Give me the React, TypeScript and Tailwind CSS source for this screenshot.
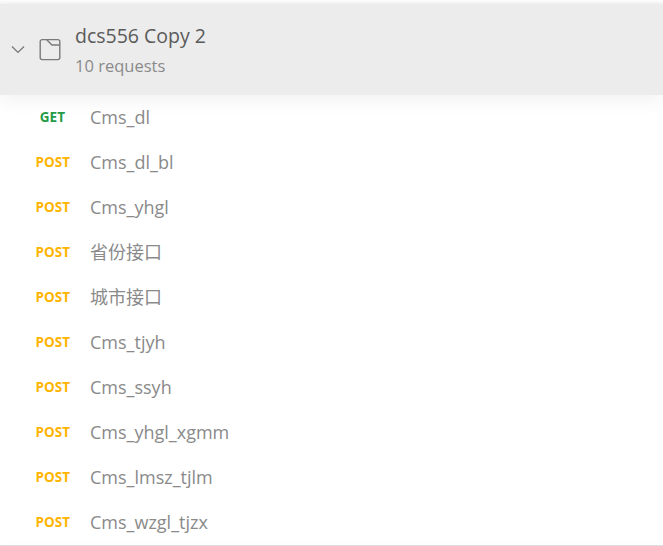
const items: [string, string][] = [
  ["GET", "Cms_dl"],
  ["POST", "Cms_dl_bl"],
  ["POST", "Cms_yhgl"],
  ["POST", "省份接口"],
  ["POST", "城市接口"],
  ["POST", "Cms_tjyh"],
  ["POST", "Cms_ssyh"],
  ["POST", "Cms_yhgl_xgmm"],
  ["POST", "Cms_lmsz_tjlm"],
  ["POST", "Cms_wzgl_tjzx"],
];

export default function App() {
  return (
    <div className="w-[663px] h-[546px] overflow-hidden bg-white font-['Open_Sans','Noto_Sans_CJK_SC',sans-serif] flex flex-col">
      <div className="h-[4px] shrink-0 bg-gradient-to-b from-white to-[#f3f3f3]" />
      <div className="relative h-[91px] shrink-0 bg-[#ececec] shadow-[0_5px_18px_rgba(0,0,0,0.06)] flex items-center">
        <svg className="ml-[10px] w-[16px] h-[16px] text-[#757575]" viewBox="0 0 16 16" fill="none" stroke="currentColor" strokeWidth="1.2">
          <path d="M2 4.5l6 6 6-6" />
        </svg>
        <svg className="ml-[12px] w-[24px] h-[24px] text-[#7a7a7a]" viewBox="0 0 24 24" fill="none" stroke="currentColor" strokeWidth="1.4">
          <rect x="2.2" y="1.6" width="19.6" height="20" rx="2" />
          <path d="M8.5 1.6l5.5 5.4h7.8" />
        </svg>
        <div className="ml-[13px] flex flex-col">
          <div className="text-[19.5px] leading-[24px] text-[#5a5a5a]">dcs556 Copy 2</div>
          <div className="mt-[8px] text-[16.5px] leading-[20px] text-[#8a8a8a]">10 requests</div>
        </div>
      </div>
      <div>
        {items.map(([m, n], i) => (
          <div key={i} className="h-[45px] flex items-center">
            <div className={`w-[70px] text-right text-[13.5px] font-bold ${m === "GET" ? "text-[#249c47] pr-[5px]" : "text-[#ffb400]"}`}>{m}</div>
            <div className="ml-[20px] text-[18px] text-[#8a8a8a]">{n}</div>
          </div>
        ))}
      </div>
      <div className="mt-auto shrink-0 h-[3px] bg-[#f5f5f5] border-t border-[#dedede] shadow-[0_-4px_10px_rgba(0,0,0,0.02)]" />
    </div>
  );
}
